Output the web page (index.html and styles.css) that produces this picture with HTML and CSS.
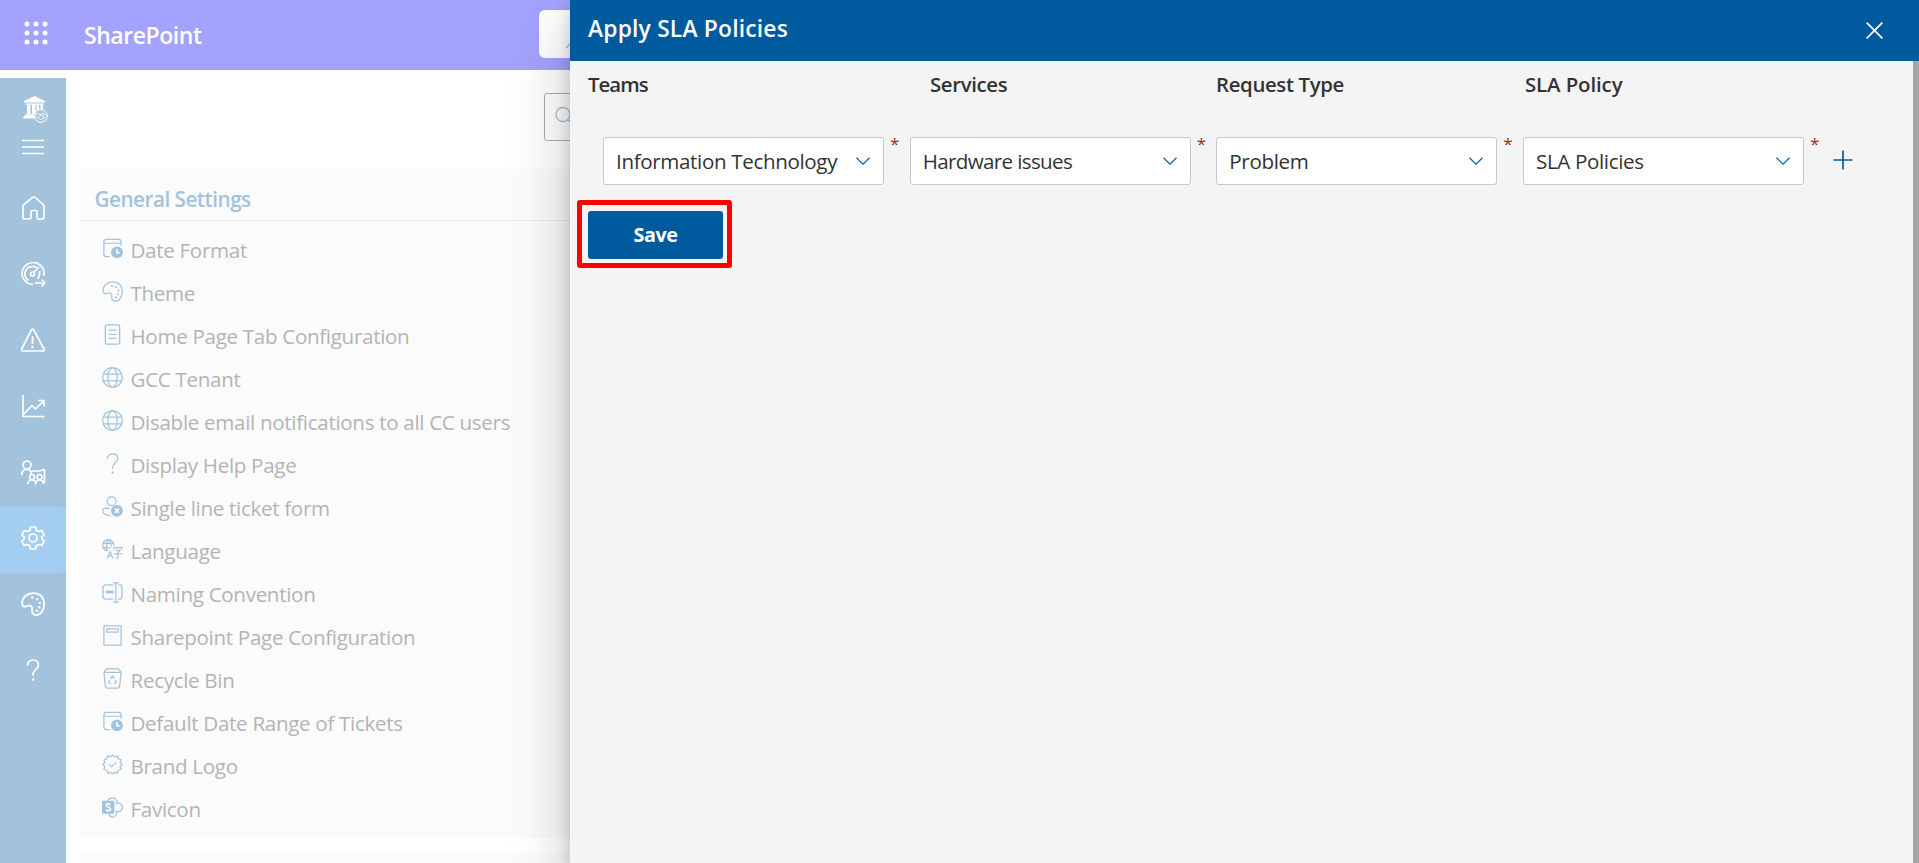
FILE: index.html
```
<!DOCTYPE html>
<html lang="en">
<head>
<meta charset="utf-8">
<title>Apply SLA Policies</title>
<link rel="stylesheet" href="styles.css">
</head>
<body>
<svg class="defs" aria-hidden="true">
  <symbol id="palette" viewBox="0 0 22 22"><path d="M1 10.5C1 5 5.500 1 11.500 1C17.500 1 21.200 5 21.200 10.500C21.200 16 18.500 21.200 14 21.200C11 21.200 10 19 10.200 16.500C10.400 13.500 9.500 12.300 7.500 12.500C5.500 12.700 4.800 13.700 3.200 13.300C1.600 12.900 1 12 1 10.500Z"/><g class="solid"><circle cx="10.500" cy="5" r="1.100"/><circle cx="14.800" cy="6.500" r="1.100"/><circle cx="17.200" cy="10" r="1.100"/><circle cx="16.700" cy="14" r="1.100"/><circle cx="14.300" cy="17.200" r="1.100"/></g></symbol>
  <symbol id="globe" viewBox="0 0 22 22"><circle cx="11" cy="11" r="10.300"/><ellipse cx="11" cy="11" rx="4.900" ry="10.300"/><path d="M1.600 7.500H20.400M1.600 14.500H20.400"/></symbol>
  <symbol id="question" viewBox="0 0 22 22"><path d="M5.500 6.500C5.500 3 7.800 1 11 1C14.200 1 16.500 3 16.500 6C16.500 10.500 11 10.500 11 15.500V16.800"/><circle class="solid" cx="11" cy="20.500" r="1.200"/></symbol>
  <symbol id="calendar" viewBox="0 0 22 22"><path d="M8 19.500H4.500Q2 19.500 2 17V4Q2 1.500 4.500 1.500H17.500Q20 1.500 20 4V8M2 5.500H20"/><circle class="solid" cx="15.700" cy="15" r="6.200"/><path class="cut" d="M15.700 11.500V15.500H18.500"/></symbol>
  <symbol id="chev" viewBox="0 0 14 8"><path d="M.5.7L7 7.200L13.500.7"/></symbol>
</svg>

<div class="page">
  <header class="suite">
    <svg class="waffle" viewBox="0 0 24 24"><circle cx="3" cy="3" r="2.500"/><circle cx="12" cy="3" r="2.500"/><circle cx="21" cy="3" r="2.500"/><circle cx="3" cy="12" r="2.500"/><circle cx="12" cy="12" r="2.500"/><circle cx="21" cy="12" r="2.500"/><circle cx="3" cy="21" r="2.500"/><circle cx="12" cy="21" r="2.500"/><circle cx="21" cy="21" r="2.500"/></svg>
    <span class="suite-name">SharePoint</span>
    <div class="suite-search"><svg class="icon" viewBox="0 0 16 16"><path d="M1 15L8 8"/></svg></div>
  </header>

  <div class="workspace">
    <nav class="rail">
      <div class="rail-brand">
        <svg class="bank" viewBox="0 0 25 27"><path d="M11.500 0L22 5V6.500H1V5ZM2.500 7.500H20.500V8.800H2.500ZM4 8.800H7.500V18H4ZM9 8.800H12.500V18H9ZM13.700 8.800H16V13.500L13.700 15ZM17.500 8.800H20V13.500H17.500ZM2.500 18.300H11.300V20H1.800ZM1 20H11.500L12 22.500H0Z"/><circle class="ring" cx="18" cy="20" r="6.300"/><path class="ring" d="M13 18.500L15 17.500L17 18.500L19.500 17.500L22.800 19M13.500 20.500L17.500 23.500L22.500 21.500M16 20.500L18.500 19L21 21"/></svg>
        <svg class="burger" viewBox="0 0 22 16"><path d="M0 1.500H22M0 8H22M0 14.500H22"/></svg>
      </div>
      <a class="rail-item"><svg class="icon" viewBox="0 0 24 24"><path d="M2 10.300Q2 9.300 3 8.500L11.500 1.500Q13 .5 14.500 1.500L22 8.500Q23 9.300 23 10.300V21Q23 23 21 23H17.500Q16 23 16 21.500V15.500Q16 14.500 15 14.500H11Q10 14.500 10 15.500V21.500Q10 23 8.500 23H4Q2 23 2 21Z"/></svg></a>
      <a class="rail-item"><svg class="icon" viewBox="0 0 24 24"><path d="M12 22.500A11 11 0 1 1 22.800 14"/><path d="M7.500 18.500A7.500 7.500 0 1 1 15.500 5.500M18.500 9Q19.500 13 16.500 17M13 10L18 5M13.500 21H24M20.500 17.500L24 21L20.500 24.300"/><circle cx="11.500" cy="12" r="2"/></svg></a>
      <a class="rail-item"><svg class="icon" viewBox="0 0 24 24"><path d="M10.300 2Q11.500 0 12.700 2L23 21Q23.700 23 21.800 23H1.600Q0 23 .7 21ZM11.500 8V16"/><circle class="solid" cx="11.500" cy="19" r="1.200"/></svg></a>
      <a class="rail-item"><svg class="icon" viewBox="0 0 24 24"><path d="M2 1V22.500H23.500M3 20L11 11.500L14.500 15L22.500 7M17 6.500H23V12.500"/></svg></a>
      <a class="rail-item"><svg class="icon" viewBox="0 0 24 24"><circle cx="6" cy="5" r="4"/><path d="M.8 15Q.8 9.500 6 9.500Q8.500 9.500 10.500 12.500M10 11H18L23.500 9.500V22H21M10 11V14"/><circle cx="11" cy="17" r="2.500"/><circle cx="18.500" cy="17" r="2.500"/><path d="M7 24Q7 20 11 20Q14.500 20 14.700 24Q15 20 18.500 20Q22 20 22.500 24"/></svg></a>
      <a class="rail-item active"><svg class="icon" viewBox="0 0 24 24"><circle cx="12" cy="12" r="4"/><path d="M9.500 1H14.500L15.300 4.300L17.500 5.500L20.700 4.500L23.200 8.800L20.800 11.200V12.800L23.200 15.200L20.700 19.500L17.500 18.500L15.300 19.700L14.500 23H9.500L8.700 19.700L6.500 18.500L3.300 19.500L.8 15.200L3.200 12.800V11.200L.8 8.800L3.300 4.500L6.500 5.500L8.700 4.300Z"/></svg></a>
      <a class="rail-item"><svg class="icon"><use href="#palette"/></svg></a>
      <a class="rail-item"><svg class="icon help"><use href="#question"/></svg></a>
    </nav>

    <main class="content">
      <div class="toolbar">
        <div class="filter"><svg class="icon" viewBox="0 0 18 18"><circle cx="8" cy="7.500" r="7"/><path d="M13 12.500L18 17.500"/></svg></div>
      </div>
      <section class="card">
        <h2 class="card-title">General Settings</h2>
        <ul class="settings">
          <li><svg class="icon"><use href="#calendar"/></svg><span>Date Format</span></li>
          <li><svg class="icon"><use href="#palette"/></svg><span>Theme</span></li>
          <li><svg class="icon" viewBox="0 0 22 22"><rect x="3.500" y="1" width="15" height="20" rx="1.500"/><path d="M7 6.500H15M7 11H15M7 15H15"/></svg><span>Home Page Tab Configuration</span></li>
          <li><svg class="icon"><use href="#globe"/></svg><span>GCC Tenant</span></li>
          <li><svg class="icon"><use href="#globe"/></svg><span>Disable email notifications to all CC users</span></li>
          <li><svg class="icon"><use href="#question"/></svg><span>Display Help Page</span></li>
          <li><svg class="icon" viewBox="0 0 22 22"><circle cx="10" cy="5.500" r="4.700"/><path d="M8 13H3Q1 13 1 15.500Q1 20.500 9 20.500"/><circle class="solid" cx="15.700" cy="15.500" r="6.200"/><path class="cut" d="M13.500 13.300L17.900 17.700M17.900 13.300L13.500 17.700"/></svg><span>Single line ticket form</span></li>
          <li><svg class="icon" viewBox="0 0 22 22"><path d="M5.500 12.500A6 6 0 1 1 12.700 7M6.800.8Q3 6.500 5.800 12.500M6.800.8Q10 3.500 9.800 8M1 4.500H12.500M1 9H9M5.500 20.500L8.500 13L11.500 20.500M6.500 18H10.500M12.500 11V9H21V11M14.500 12H19L16.700 14V19Q16.700 20 14.500 20M12.500 15.500H21.500"/></svg><span>Language</span></li>
          <li><svg class="icon" viewBox="0 0 22 22"><path d="M12 3H4Q1 3 1 6V15Q1 18 4 18H12M17 3H18.500Q21 3 21 6V15Q21 18 18.500 18H17M14.500 1V21M11.500 1H17.500M11.500 21H17.500"/><path class="thick" d="M4 10.500H12"/></svg><span>Naming Convention</span></li>
          <li><svg class="icon" viewBox="0 0 22 22"><path d="M2 1H20V21H2ZM5 4H17V7.500H5Z"/></svg><span>Sharepoint Page Configuration</span></li>
          <li><svg class="icon" viewBox="0 0 22 22"><path d="M2 4.500L4 1.700Q4.500 1 6 1H16Q17.500 1 18 1.700L20 4.500L18.500 19Q18.300 21 16.500 21H5.500Q3.700 21 3.500 19ZM2 4.500H20"/><path d="M9 11L11 8.500L13 11M14 12.500L15 15L12.500 16.500M9.500 16.500L7 15.500L8 12.500"/></svg><span>Recycle Bin</span></li>
          <li><svg class="icon"><use href="#calendar"/></svg><span>Default Date Range of Tickets</span></li>
          <li><svg class="icon" viewBox="0 0 22 22"><path d="M11 1L13.300 3L16 2L17 5L20 6L19 8.700L21 11L19 13.300L20 16L17 17L16 20L13.300 19L11 21L8.700 19L6 20L5 17L2 16L3 13.300L1 11L3 8.700L2 6L5 5L6 2L8.700 3ZM7.500 11L10 13.500L15 8.500"/></svg><span>Brand Logo</span></li>
          <li><svg class="icon" viewBox="0 0 22 22"><path d="M6 4.500Q7 1 11 1Q15 1 16 5.500M14 7.500Q16 5.500 18.500 6.500Q21.500 8 21.500 11Q21 15 17 15.500Q15.500 15.500 14 14.500M7.500 18Q8 21 11 21Q15 21 15.500 15.500"/><rect class="solid" x="0" y="4" width="13" height="13.500" rx="1"/><path class="cut" d="M9 7.700Q4.500 6.300 4.500 8.700C4.500 10.500 9 10.700 9 13Q8.500 15.200 4.300 13.800"/></svg><span>Favicon</span></li>
        </ul>
      </section>
      <section class="card next"></section>
    </main>
  </div>
</div>

<aside class="drawer">
  <header class="drawer-head">
    <h1>Apply SLA Policies</h1>
    <svg class="close" viewBox="0 0 18 18"><path d="M.7.700L17.300 17.300M17.300.7L.7 17.300"/></svg>
  </header>
  <div class="drawer-body">
    <div class="labels">
      <span class="tight">Teams</span><span>Services</span><span>Request Type</span><span class="wide">SLA Policy</span>
    </div>
    <div class="fields">
      <div class="field"><div class="select"><span>Information Technology</span><svg class="chev"><use href="#chev"/></svg></div><i>*</i></div>
      <div class="field"><div class="select"><span class="tight">Hardware issues</span><svg class="chev"><use href="#chev"/></svg></div><i>*</i></div>
      <div class="field"><div class="select"><span>Problem</span><svg class="chev"><use href="#chev"/></svg></div><i>*</i></div>
      <div class="field"><div class="select"><span>SLA Policies</span><svg class="chev"><use href="#chev"/></svg></div><i>*</i></div>
      <svg class="plus" viewBox="0 0 20 20"><path d="M10 .5V19.500M.5 10H19.500"/></svg>
    </div>
    <div class="callout"><button class="save">Save</button></div>
  </div>
</aside>
</body>
</html>
```
FILE: styles.css
```
* { box-sizing: border-box; }
html { height: 863px; overflow: hidden; }
body {
  margin: 0;
  height: 863px;
  overflow: hidden;
  position: relative;
  background: #fff;
  font-family: "Open Sans", "Noto Sans", sans-serif;
  font-size: 20.600px;
  letter-spacing: -.36px;
  color: #333;
}
h1, h2, ul { margin: 0; padding: 0; }
ul { list-style: none; }
.defs { position: absolute; width: 0; height: 0; }
svg { display: block; flex: none; }

.icon { fill: none; stroke: currentColor; stroke-width: 1.3; stroke-linejoin: round; overflow: visible; }
.solid { fill: currentColor; stroke: none; }
.cut { stroke: #fbfbfb; stroke-width: 1.8; fill: none; }
.thick { stroke-width: 2.8; }
.tight { letter-spacing: -.65px; }
.labels .tight { letter-spacing: -.95px; }
.wide { letter-spacing: -.1px; }

.page { display: flex; flex-direction: column; gap: 8px; height: 863px; overflow: hidden; }
.suite { display: flex; flex: none; height: 70px; background: #a3a3ff; color: #fff; }
.waffle { width: 24px; height: 24px; margin: 21px 0 0 23.500px; fill: #fff; }
.suite-name { width: 455px; margin-left: 36.500px; font-size: 23px; font-weight: 600; line-height: 71px; letter-spacing: -.45px; }
.suite-search { flex: 1; height: 48px; margin-top: 10px; border-radius: 6px; background: #fff; color: #a3c3dd; padding: 23px 0 0 26px; }
.suite-search .icon { width: 16px; height: 16px; }

.workspace { display: flex; flex: 1; gap: 14px; min-height: 0; overflow: hidden; }
.rail { width: 66px; background: #a3c3dd; color: #fff; }
.rail-brand { height: 99px; padding: 18px 0 0 22px; }
.bank { width: 25px; height: 27px; fill: #fff; margin-left: 1px; }
.ring { fill: none; stroke: #fff; stroke-width: 1; }
circle.ring { fill: #a3c3dd; }
.burger { width: 22px; height: 16px; margin-top: 15.500px; stroke: #fff; stroke-width: 1.500; }
.rail-item { display: flex; height: 66px; align-items: center; justify-content: center; padding-bottom: 4px; }
.rail-item .icon { width: 24px; height: 24px; stroke-width: 1.700; }
.rail-item .help { width: 22px; height: 22px; }
.active { background: #a3cef1; border-radius: 4px; }

.content { flex: 1; height: 785px; overflow: hidden; }
.toolbar { display: flex; height: 91px; padding: 15px 0 0 464px; }
.filter { flex: 1; height: 48px; border: 1px solid #adadad; border-radius: 3px; color: #a3c3dd; padding: 13px 0 0 10px; }
.filter .icon { width: 18px; height: 18px; }
.card { height: 669px; background: #fbfbfb; }
.next { height: 10px; margin-top: 15px; }
.card-title { height: 52px; padding: 7px 0 0 14.500px; border-bottom: 1px solid #eaeaea; font-size: 20.700px; font-weight: 600; line-height: 46px; letter-spacing: -.5px; color: #a3c3dd; }
.settings { padding-top: 7px; letter-spacing: -.32px; }
.settings li { display: flex; height: 43px; align-items: center; gap: 7.500px; padding-left: 22px; color: #b4b4b4; }
.settings .icon { width: 21px; height: 21px; color: #a3c3dd; margin-top: -3px; }

.drawer {
  position: absolute; top: 0; left: 570px; right: 0; bottom: 0;
  background: #f4f4f4;
  box-shadow: 0 25.600px 57.600px rgba(0,0,0,.22), 0 4.800px 14.400px rgba(0,0,0,.18);
}
.drawer-head { display: flex; justify-content: space-between; height: 61px; padding: 0 36px 0 18px; background: #005a9e; color: #fff; }
.drawer-head h1 { font-size: 22.800px; font-weight: 600; line-height: 57px; letter-spacing: .2px; }
.close { width: 17px; height: 17px; margin-top: 22px; stroke: #fff; stroke-width: 1.800; }
.drawer-body { height: 802px; padding-left: 7px; border-right: 6px solid #a6a6a6; }
.labels { display: grid; grid-template-columns: 342px 286px 309px auto; padding-left: 11px; height: 76px; font-size: 20.400px; font-weight: 600; line-height: 47px; }
.fields { display: flex; padding-left: 26px; height: 63px; }
.field { display: flex; width: 306.670px; }
.select { display: flex; justify-content: space-between; align-items: center; width: 281px; height: 48px; padding: 0 13px 0 12px; border: 1px solid #c8c8c8; border-radius: 3px; background: #fff; }
.chev { width: 14px; height: 8px; fill: none; stroke: #0f6cab; stroke-width: 1.300; }
.field i { margin-left: 6px; font-style: normal; font-size: 17px; line-height: 19px; margin-top: -3px; color: #a4262c; }
.plus { width: 20px; height: 20px; margin: 13px 0 0 3.500px; stroke: #005a9e; stroke-width: 1.700; }
.callout { width: 155px; height: 68px; border: 5px solid #f00; border-radius: 3px; padding: 6px; }
.save { width: 135px; height: 48px; border: 0; border-radius: 3px; background: #005a9e; color: #fff; font: 700 19.800px/48px "Open Sans", sans-serif; letter-spacing: -.5px; padding: 0; }
```
